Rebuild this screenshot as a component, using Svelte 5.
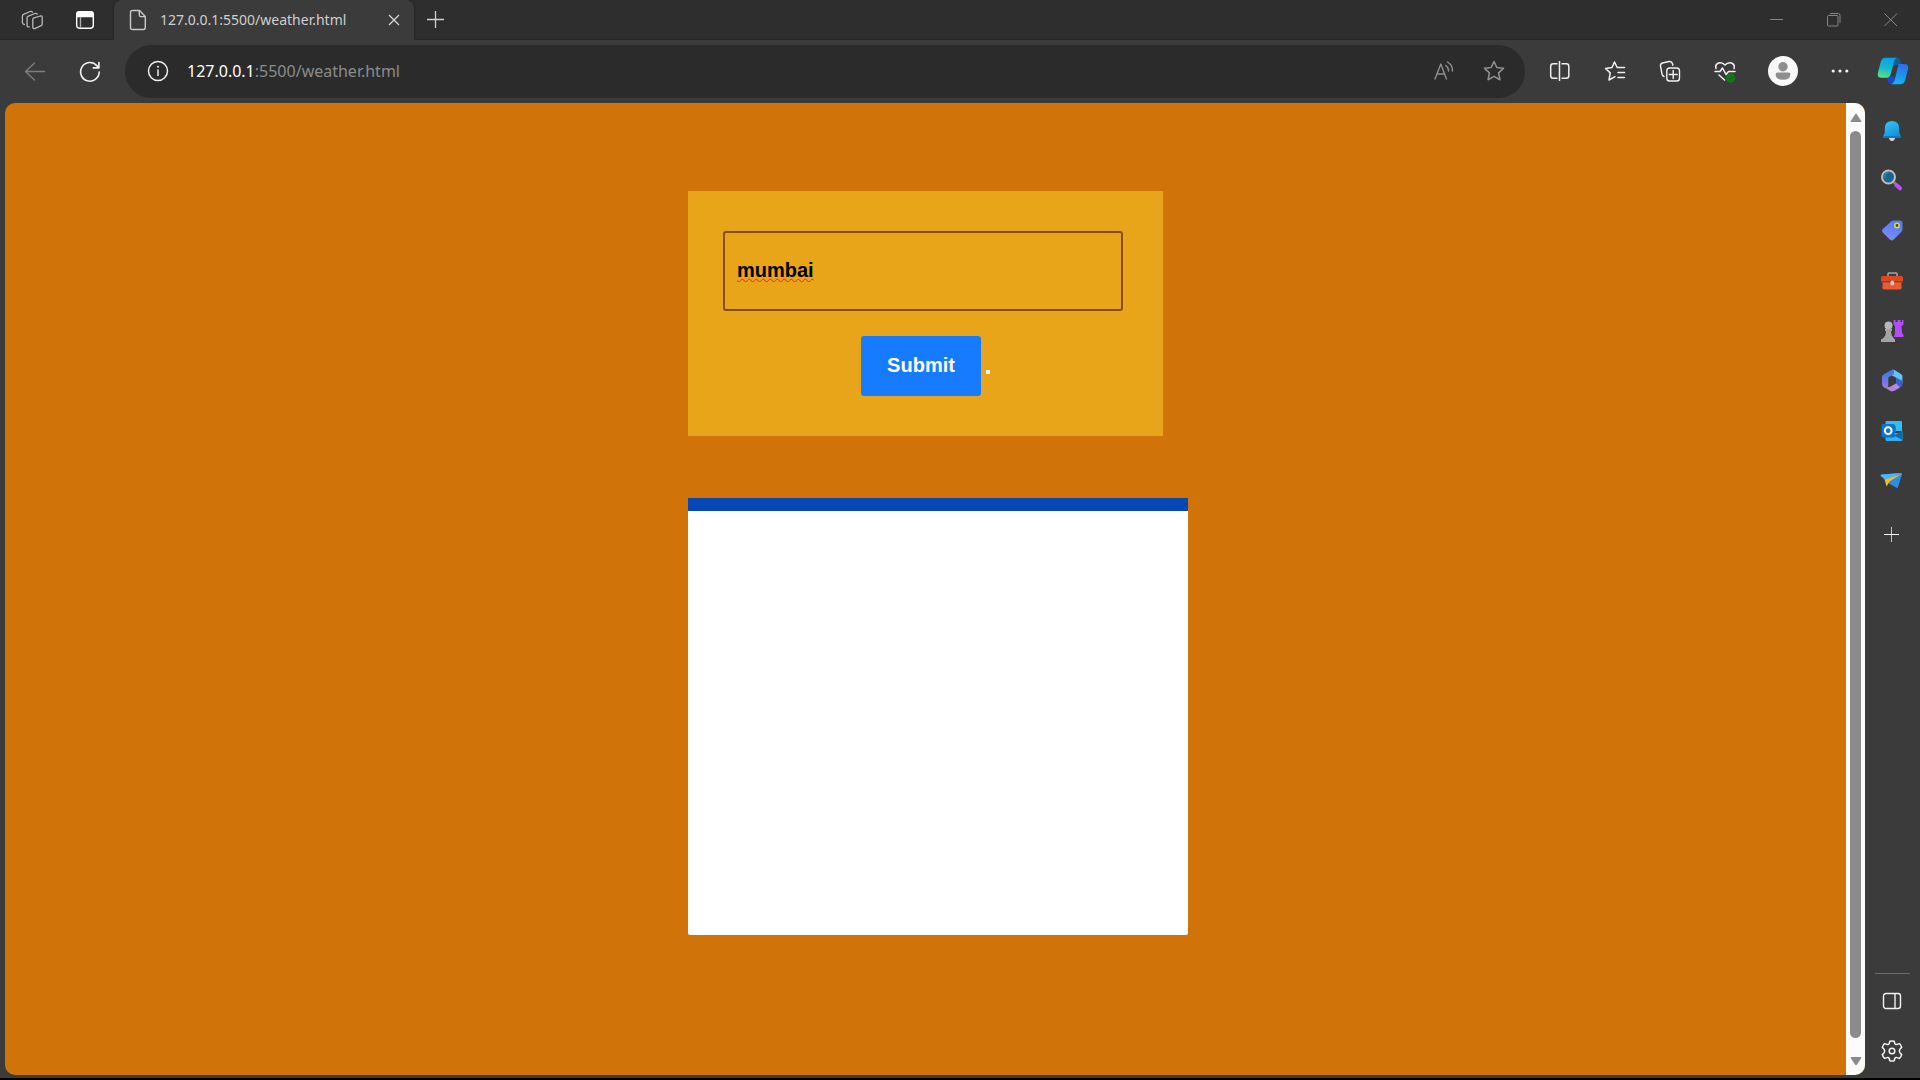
<script>
  let city = $state('mumbai');
</script>

<div class="window">
  <header class="tabbar">
    <button class="tab-tool workspaces" aria-label="Workspaces">
      <svg width="24" height="24" viewBox="0 0 24 24" fill="none" stroke="#b9b9b9" stroke-width="1.3" stroke-linejoin="round" stroke-linecap="round">
        <path d="M13.300 10.200 20.300 8q1.900-.5 1.900 1.300v7q0 1-1 1.400l-6 2.600q-2.400 1-2.400-1.200v-7.600q0-1 .5-1.300Z" />
        <path d="M9.300 18.800q-2.200.6-2.200-1.500V9.800q0-1.200 1.200-1.600L15 5.500q1.300-.5 2.200.6" />
        <path d="M4.400 16.500q-2-.2-2-2V8q0-1.200 1.200-1.600l6.500-2.900q1.400-.6 2.400.6" />
      </svg>
    </button>
    <button class="tab-tool tab-actions" aria-label="Tab actions menu">
      <svg width="20" height="20" viewBox="0 0 20 20" fill="none" stroke="#fff" stroke-width="1.4">
        <rect x="1.700" y="1.700" width="16.600" height="16.600" rx="3" />
        <path d="M1.700 6.500V4.500q0-2.800 2.800-2.800h11q2.800 0 2.800 2.800v2Z" fill="#fff" />
        <path d="M5.500 7v11" stroke="#aaa" />
      </svg>
    </button>
    <div class="tab">
      <svg width="18" height="22" viewBox="0 0 18 22" fill="none" stroke="#c8c8c8" stroke-width="1.4" stroke-linejoin="round">
        <path d="M3.500 1.500h7L16.300 7.400v11.100q0 2-2 2H3.500q-2 0-2-2v-15q0-2 2-2Z" />
        <path d="M10.300 1.700V6q0 1.600 1.600 1.600h4.200" />
      </svg>
      <span class="tab-title">127.0.0.1:5500/weather.html</span>
      <button class="tab-close" aria-label="Close tab">
        <svg width="12" height="12" viewBox="0 0 12 12" stroke="#d2d2d2" stroke-width="1.4"><path d="m1 1 10 10M11 1 1 11" /></svg>
      </button>
    </div>
    <button class="new-tab" aria-label="New tab">
      <svg width="18" height="18" viewBox="0 0 18 18" stroke="#d0d0d0" stroke-width="1.3"><path d="M8.500 0v17M0 8.500h17" /></svg>
    </button>
    <div class="window-controls">
      <button aria-label="Minimize"><svg width="14" height="14" viewBox="0 0 14 14" stroke="#858585"><path d="M0 6.500h13" /></svg></button>
      <button aria-label="Restore">
        <svg width="14" height="14" viewBox="0 0 14 14" fill="none" stroke="#858585"><rect x=".5" y="2.500" width="10.500" height="10.500" rx="1" /><path d="M3 .5h8.500q1.500 0 1.500 2V10" /></svg>
      </button>
      <button aria-label="Close window"><svg width="14" height="14" viewBox="0 0 14 14" stroke="#858585"><path d="m.5.5 12.500 12.500M13 .5.5 13" /></svg></button>
    </div>
  </header>

  <nav class="toolbar" aria-label="Browser toolbar">
    <button class="back" aria-label="Back">
      <svg width="22" height="22" viewBox="0 0 22 22" fill="none" stroke="#7d7d7d" stroke-width="1.4" stroke-linecap="round" stroke-linejoin="round"><path d="M20.500 10.500H1.500M10.500 2 1.500 10.500l9 8.500" /></svg>
    </button>
    <button class="reload" aria-label="Refresh">
      <svg width="22" height="22" viewBox="0 0 22 22" fill="none" stroke="#f2f2f2" stroke-width="1.6" stroke-linecap="round" stroke-linejoin="round"><path d="M20.200 11A9.300 9.300 0 1 1 17.800 4.600l2 2.200M19.900 1.500v5.400h-5.600" /></svg>
    </button>
    <div class="address">
      <button class="site-info" aria-label="View site information">
        <svg width="22" height="22" viewBox="0 0 22 22" fill="none" stroke="#f0f0f0" stroke-width="1.5"><circle cx="11" cy="11" r="9.500" /><path d="M11 9.500v6.500" /><circle cx="11" cy="6.800" r="1" fill="#f0f0f0" stroke="none" /></svg>
      </button>
      <div class="url"><span class="host">127.0.0.1</span>:5500/weather.html</div>
      <button class="address-tool" aria-label="Read aloud">
        <svg width="22" height="22" viewBox="0 0 22 22" fill="none" stroke="#8f8f8f" stroke-width="1.4" stroke-linecap="round" stroke-linejoin="round"><path d="M2 19 7.800 4l5.700 15M4 14h7.700M12.800 5.500q3 2.200 2.700 5.500M14.500 2q5.500 3.600 5 9" /></svg>
      </button>
      <button class="address-tool" aria-label="Add this page to favorites">
        <svg width="22" height="22" viewBox="0 0 22 22" fill="none" stroke="#8f8f8f" stroke-width="1.6" stroke-linejoin="round"><path d="m11 1.500 2.800 6 6.700.8-4.900 4.600 1.300 6.800L11 16.400l-5.900 3.300 1.300-6.800L1.500 8.300l6.700-.8Z" /></svg>
      </button>
    </div>
    <div class="actions">
      <button aria-label="Split screen">
        <svg width="22" height="22" viewBox="0 0 22 22" fill="none" stroke="#ededed" stroke-width="1.5"><path d="M8.500 3.700H4.200Q1.700 3.700 1.700 6.200v9.600q0 2.500 2.500 2.500h4.300M12.500 3.700h4.800q2.500 0 2.500 2.500v9.600q0 2.500-2.500 2.500h-4.800M10.500 1v20" /></svg>
      </button>
      <button aria-label="Favorites">
        <svg width="22" height="22" viewBox="0 0 22 22" fill="none" stroke="#f2f2f2" stroke-width="1.5" stroke-linecap="round" stroke-linejoin="round"><path d="M20.500 7.500h-7.300L10.500 2 8 7.500l-6.500 1 4.700 4.400L5 20l6-3.300M14 12.500h6.500M14 17.500h6.500" /></svg>
      </button>
      <button aria-label="Collections">
        <svg width="22" height="22" viewBox="0 0 22 22" fill="none" stroke="#f0f0f0" stroke-width="1.4" stroke-linecap="round" stroke-linejoin="round"><rect x="7.800" y="8" width="12.700" height="13" rx="2.800" /><path d="M14.200 10.500v8M10.200 14.500h8M5 16.500q-1.500-.5-2-2.500L1.500 6Q1.200 3.600 3.500 3L10 1.500q2.700-.5 3.500 2.200l.4 1.500" /></svg>
      </button>
      <button aria-label="Browser essentials">
        <svg width="22" height="24" viewBox="0 0 22 24" fill="none" stroke="#f0f0f0" stroke-width="1.5" stroke-linecap="round" stroke-linejoin="round"><path d="M2 9.500Q.8 5.300 4.500 4 8 2.800 11 6q3-3.200 6.500-2 3.700 1.300 2.500 5.500M1 12.500h5L8.500 9l3.500 6.500 2.500-3H21M5 16l5.500 5" /><circle cx="16.500" cy="19" r="4.700" fill="#107c10" stroke="none" /><path d="m14.500 19 1.500 1.500 2.700-3" stroke="#2b4a2b" stroke-width="1" /></svg>
      </button>
      <button class="profile" aria-label="Profile">
        <svg width="30" height="30" viewBox="0 0 30 30"><circle cx="15" cy="15" r="15" fill="#fafafa" /><circle cx="15" cy="10.700" r="4.700" fill="#8e8e8e" /><path d="M9.500 16.500h11q1.800 0 1.800 1.700 0 5.500-7.300 5.500t-7.300-5.500q0-1.700 1.800-1.700Z" fill="#8e8e8e" /></svg>
      </button>
      <button class="more" aria-label="Settings and more">
        <svg width="18" height="4" viewBox="0 0 18 4" fill="#f0f0f0"><circle cx="2.200" cy="2" r="1.600" /><circle cx="9" cy="2" r="1.600" /><circle cx="15.800" cy="2" r="1.600" /></svg>
      </button>
      <button class="copilot" aria-label="Copilot">
        <svg width="32" height="28" viewBox="0 0 32 28">
          <defs>
            <linearGradient id="cp-left" x1=".5" y1="0" x2=".3" y2="1"><stop offset="0" stop-color="#08a0e8" /><stop offset=".5" stop-color="#12b9cc" /><stop offset="1" stop-color="#5be08c" /></linearGradient>
            <linearGradient id="cp-right" x1=".6" y1="0" x2=".4" y2="1"><stop offset="0" stop-color="#2b6fe8" /><stop offset="1" stop-color="#10b4f8" /></linearGradient>
          </defs>
          <path d="M15 .7h5q2.300 0 3 2.300L24.500 8H19q-2.500 0-3.500 3l-2-6Z" fill="#0a5f94" />
          <path d="M8 19.500h9l1 7.500h-3q-3.200 0-4-2.700l-1-3q-.5-1.500-2-1.800Z" fill="#1747d8" />
          <path d="M8.500.7H20q-2.200.6-3 3.800l-3.200 12.500q-1 3.700-4.300 3.700H4.500Q-.3 20.700 1 15.500L3.700 5Q4.900.7 8.500.7Z" fill="url(#cp-left)" />
          <path d="M20.500 7h6.800q4.900 0 3.700 5.300L28.300 22.800Q27.100 27.300 23 27.300h-9q2.700-.8 3.500-3.800l3.300-13Q22 7.500 20.500 7Z" fill="url(#cp-right)" />
        </svg>
      </button>
    </div>
  </nav>

  <div class="body">
    <div class="viewport">
      <main class="page">
        <div class="column">
          <form class="search-card" onsubmit={(e) => e.preventDefault()}>
            <input class="city" type="text" aria-label="City" spellcheck="false" bind:value={city} />
            <div class="submit-row">
              <button class="submit" type="submit">Submit</button>
              <span class="marker" aria-hidden="true"></span>
            </div>
          </form>
          <section class="result-card" aria-label="Weather result"></section>
        </div>
      </main>
      <div class="scrollbar" aria-hidden="true">
        <svg width="12" height="10" viewBox="0 0 12 10" fill="#8b8b8b"><path d="M5 1.500q1-1.500 2 0l4.300 6.500q.4 1-.6 1H1.300Q.3 9 .7 8Z" /></svg>
        <div class="thumb"></div>
        <svg width="12" height="10" viewBox="0 0 12 10" fill="#8b8b8b"><path d="M5 8.500q1 1.500 2 0L11.300 2q.4-1-.6-1H1.300Q.3 1 .7 2Z" /></svg>
      </div>
    </div>

    <aside class="sidebar" aria-label="Sidebar">
      <button aria-label="Notifications">
        <svg width="24" height="24" viewBox="0 0 24 24">
          <defs><linearGradient id="bell" x1="0" y1="0" x2=".6" y2="1"><stop offset="0" stop-color="#35c9f8" /><stop offset="1" stop-color="#1490df" /></linearGradient></defs>
          <path d="M9 19h6q-.5 3-3 3t-3-3Z" fill="#d6d6d6" />
          <path d="M12 2q6.800 0 7.200 7v4.500l1.600 4q.3 1-.8 1H4q-1.100 0-.8-1l1.600-4V9Q5.200 2 12 2Z" fill="url(#bell)" />
          <path d="M3.500 17h17l.4 1.300q0 .7-1 .7H4.100q-1 0-1-.7Z" fill="#1674c4" />
        </svg>
      </button>
      <button aria-label="Search">
        <svg width="24" height="24" viewBox="0 0 24 24">
          <path d="m13.500 13 3 2.500" stroke="#8b8b8b" stroke-width="2.500" />
          <path d="m16.300 16 3.700 3.300" stroke="#c04df0" stroke-width="4" stroke-linecap="round" />
          <circle cx="8.500" cy="8" r="6.500" fill="#1d648c" stroke="#bdbdbd" stroke-width="2" />
          <path d="M4.500 9a4.500 4.500 0 0 1 4-5.500" fill="none" stroke="#2f86ae" stroke-width="1.500" />
        </svg>
      </button>
      <button aria-label="Shopping">
        <svg width="24" height="24" viewBox="0 0 24 24">
          <defs><linearGradient id="tag" x1=".8" y1="0" x2=".3" y2="1"><stop offset="0" stop-color="#4f7bf0" /><stop offset="1" stop-color="#7c8cff" /></linearGradient></defs>
          <path d="M13.500 1.500H20q2.500 0 2.500 2.500v6.500q0 1.200-1 2.200l-8 8q-1.700 1.500-3.400 0l-7.400-7.200q-1.500-1.700 0-3.300L11 2.500q1-1 2.500-1Z" fill="url(#tag)" />
          <circle cx="17" cy="6.500" r="2.200" fill="#374069" stroke="#f6d31f" stroke-width="1.600" />
        </svg>
      </button>
      <button aria-label="Tools">
        <svg width="24" height="24" viewBox="0 0 24 24">
          <path d="M8 7V5q0-1 1-1h7q1 0 1 1v2" fill="none" stroke="#a5a5a5" stroke-width="1.600" />
          <path d="M2.500 12h19v7q0 1.500-1.500 1.500H4q-1.500 0-1.500-1.500Z" fill="#e85c32" />
          <path d="M2.500 7h19q1.500 0 1.500 1.500V13H1V8.500Q1 7 2.500 7Z" fill="#d94a1f" />
          <path d="M1 12h22v1.500H1Z" fill="#a9371a" /><rect x="10.500" y="11.500" width="3.600" height="5" rx="1.800" fill="#c9c9c9" />
        </svg>
      </button>
      <button aria-label="Games">
        <svg width="24" height="24" viewBox="0 0 24 24">
          <path d="M13.500 1h2v2h2V1h3v2h1.500V1h1.500v4.500L21.500 7l.5 7 1.500 2v2H14l1-4V7l-1.500-1.500Z" fill="#b44df5" />
          <circle cx="8.500" cy="6.500" r="4" fill="#b8b8b8" />
          <path d="M5 10h7v2h-1q-.2 4 2.500 7l1.500 1.500V23H1v-2.500L3.500 19Q6.300 16 6 12H5Z" fill="#a4a4a4" />
        </svg>
      </button>
      <button aria-label="Microsoft 365">
        <svg width="24" height="24" viewBox="0 0 24 24">
          <defs>
            <linearGradient id="m-left" x1="0" y1="0" x2="0" y2="1"><stop offset="0" stop-color="#367be0" /><stop offset="1" stop-color="#8f7ae8" /></linearGradient>
            <linearGradient id="m-bottom" x1="0" y1="0" x2="1" y2="0"><stop offset="0" stop-color="#a97bd0" /><stop offset="1" stop-color="#c08ae6" /></linearGradient>
          </defs>
          <path d="M12 .8q1.300-.4 2.500.3l6.500 4q1.500 1 1.500 2.500v6.500L16 11V8.500L9 5Z" fill="#63c3f2" />
          <path d="M22.500 8v7q0 2-1.500 3l-6 4-4-4.500 5-3V8.500l5.500 3Z" fill="#3a62c4" />
          <path d="M12 .8 3.500 5.500Q2 6.500 2 8v7q0 2 1.500 3l1 .7q3.800.8 3.800-2.700V8.500L14 5V2Q13 .5 12 .8Z" fill="url(#m-left)" />
          <path d="m3.700 18 6.800 4q1.500.8 3 0l6.500-3.700L16 14.500l-4.500 2.500Q8 19 3.700 18Z" fill="url(#m-bottom)" />
        </svg>
      </button>
      <button aria-label="Outlook">
        <svg width="24" height="24" viewBox="0 0 24 24">
          <path d="M6.500 2H21q1 0 1 1v9H5.500V3q0-1 1-1Z" fill="#33bdf2" /><path d="M5.500 7H16v6H5.500Z" fill="#1583cf" />
          <path d="M22.500 12v8.500q0 1.500-1.500 1.500H7q-1.500 0-1.500-1.500V14H19Z" fill="#37aef0" /><path d="M22.500 12v9L14 16.500Z" fill="#0d67ad" />
          <rect x="1.500" y="5" width="13.500" height="13.500" rx="1.500" fill="#0a74cf" /><circle cx="8.200" cy="11.700" r="3.400" fill="none" stroke="#fff" stroke-width="2" />
        </svg>
      </button>
      <button aria-label="Drop">
        <svg width="24" height="24" viewBox="0 0 24 24">
          <path d="M1.500 5.500 21 4q1.600 0 1 1.500l-4 12.500q-.5 1.500-2 .6L5.500 12.500Z" fill="#2b8de9" />
          <path d="M1.500 5.500 21 4 6 11.500.8 7q-.8-1.300.7-1.500Z" fill="#4cb7f4" />
          <path d="M22.300 4.500 9.500 12.500l-3 5L4.800 11Z" fill="#f6bd23" />
        </svg>
      </button>
      <button class="customize" aria-label="Customize">
        <svg width="16" height="16" viewBox="0 0 16 16" stroke-width="1"><path d="M7.500 0v15" stroke="#c6c6c6" /><path d="M0 7.500h15" stroke="#fff" /></svg>
      </button>
      <hr />
      <button aria-label="Hide sidebar">
        <svg width="20" height="18" viewBox="0 0 20 18" fill="none" stroke="#f2f2f2" stroke-width="1.4"><rect x="1.500" y="1.500" width="17" height="15" rx="2.500" /><path d="M13 1.500v15" /></svg>
      </button>
      <button aria-label="Sidebar settings">
        <svg width="24" height="24" viewBox="0 0 24 24" fill="none" stroke="#f2f2f2" stroke-width="1.5" stroke-linejoin="round"><path d="M9.800 2.200q2.200-.6 4.400 0l.6 2.500q.8 1.300 2.300.7l2.400-.8q1.500 1.600 2.200 3.800l-1.800 1.800q-1.200 1.800 0 3.600l1.800 1.800q-.7 2.200-2.200 3.800l-2.400-.8q-1.500-.6-2.300.7l-.6 2.500q-2.200.6-4.400 0l-.6-2.500q-.8-1.300-2.300-.7l-2.400.8Q3 17.800 2.300 15.600l1.800-1.800q1.200-1.800 0-3.600L2.300 8.400Q3 6.200 4.500 4.600l2.400.8q1.500.6 2.300-.7Z" /><circle cx="12" cy="12" r="2.800" /></svg>
      </button>
    </aside>
  </div>
</div>

<style>
  :global(body) {
    margin: 0;
    background: #000;
  }

  .window {
    box-sizing: border-box;
    min-height: 100vh;
    display: flex;
    flex-direction: column;
    border-bottom: 2px solid #000;
    background: #3b3b3b;
    font-family: 'Noto Sans', 'Open Sans', sans-serif;
  }

  button {
    display: flex;
    align-items: center;
    justify-content: center;
    flex: none;
    margin: 0;
    padding: 0;
    border: 0;
    background: none;
    font: inherit;
  }

  svg {
    display: block;
    flex: none;
  }

  .tabbar {
    display: flex;
    height: 40px;
    background: #2e2e2e;
    box-shadow: inset 0 -1px #272727;
  }

  .workspaces {
    width: 64px;
  }

  .tab-actions {
    width: 42px;
  }

  .tab {
    display: flex;
    align-items: center;
    box-sizing: border-box;
    width: 300px;
    margin-left: 8px;
    padding: 0 14px 0 15px;
    border-radius: 8px 8px 0 0;
    background: #3b3b3b;
    box-shadow: 0 0 3px #1e1e1e;
    clip-path: inset(0 -3px 0 -3px);
  }

  .tab-title {
    flex: 1;
    margin-left: 13px;
    color: #cfcfcf;
    font-size: 14px;
    line-height: 20px;
    white-space: nowrap;
  }

  .new-tab {
    width: 44px;
  }

  .window-controls {
    display: flex;
    margin-left: auto;
    padding-right: 1px;
  }

  .window-controls button {
    width: 57px;
  }

  .toolbar {
    display: flex;
    align-items: center;
    height: 63px;
  }

  .back {
    width: 70px;
  }

  .reload {
    width: 40px;
  }

  .address {
    display: flex;
    align-items: center;
    flex: 1;
    box-sizing: border-box;
    height: 53px;
    margin-left: 15px;
    padding: 0 6px 1px 22px;
    border-radius: 27px;
    background: #2b2b2b;
  }

  .url {
    flex: 1;
    margin-left: 18px;
    color: #8c8c8c;
    font-size: 16px;
    line-height: 24px;
    white-space: nowrap;
  }

  .host {
    color: #fff;
  }

  .address-tool {
    width: 50px;
  }

  .actions {
    display: flex;
    align-items: center;
    padding: 0 0 1px 7px;
  }

  .actions button {
    width: 55px;
  }

  .actions .profile {
    width: 62px;
  }

  .actions .more {
    width: 52px;
  }

  .actions .copilot {
    width: 54px;
  }

  .body {
    display: flex;
    flex: 1;
  }

  .viewport {
    display: flex;
    flex: 1;
    margin: 0 0 3px 5px;
    border-radius: 10px;
    overflow: hidden;
    background: #d0740a;
  }

  .page {
    display: flex;
    justify-content: center;
    flex: 1;
    padding: 88px 0 140px;
    font-family: 'Liberation Sans', Arial, sans-serif;
  }

  .column {
    width: 475px;
  }

  .search-card {
    display: flex;
    flex-direction: column;
    gap: 25px;
    padding: 40px 40px 40px 35px;
    background: #e8a519;
  }

  .city {
    box-sizing: border-box;
    width: 100%;
    height: 80px;
    padding: 0 12px 2px;
    border: 2px solid #854d05;
    border-radius: 3px;
    outline: none;
    background: transparent;
    color: #000;
    font: bold 20px/36px 'Liberation Sans', Arial, sans-serif;
    text-decoration: underline wavy #ff1f0f 1px;
    text-underline-offset: 1px;
    text-decoration-skip-ink: none;
  }

  .submit-row {
    display: flex;
    align-items: center;
    justify-content: center;
    gap: 5px;
    padding-left: 5px;
  }

  .submit {
    width: 120px;
    height: 60px;
    padding-bottom: 2px;
    border-radius: 3px;
    background: #177bff;
    color: #fff;
    font-size: 20px;
    font-weight: bold;
  }

  .marker {
    width: 4px;
    height: 4px;
    margin-top: 12px;
    background: #f0f0f0;
  }

  .result-card {
    box-sizing: border-box;
    width: 500px;
    height: 437px;
    margin-top: 62px;
    border-top: 13px solid #0548b5;
    border-radius: 0 0 2px 2px;
    background: #fff;
  }

  .scrollbar {
    display: flex;
    flex-direction: column;
    align-items: center;
    box-sizing: border-box;
    width: 19px;
    padding: 10px 0 9px;
    background: #fcfcfc;
  }

  .thumb {
    flex: 1;
    width: 11px;
    margin: 8px 0 18px;
    border-radius: 6px;
    background: #8b8b8b;
  }

  .sidebar {
    display: flex;
    flex-direction: column;
    align-items: center;
    box-sizing: border-box;
    width: 55px;
    padding: 3px 1px 2px 0;
  }

  .sidebar button {
    width: 50px;
    height: 50px;
  }

  .sidebar .customize {
    height: 58px;
  }

  hr {
    width: 35px;
    margin: auto 0 2px;
    border: 0;
    border-top: 1px solid #6b6b6b;
  }
</style>
